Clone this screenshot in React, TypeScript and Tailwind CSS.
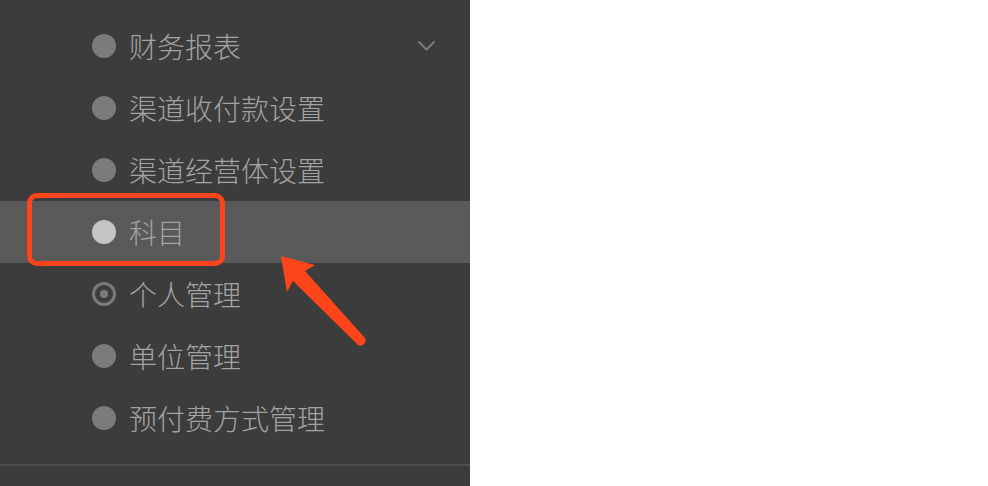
const items = [
  { label: "财务报表", kind: "dot", chevron: true },
  { label: "渠道收付款设置", kind: "dot" },
  { label: "渠道经营体设置", kind: "dot" },
  { label: "科目", kind: "active" },
  { label: "个人管理", kind: "ring" },
  { label: "单位管理", kind: "dot" },
  { label: "预付费方式管理", kind: "dot" },
];

const Marker = ({ kind }: { kind: string }) => {
  if (kind === "ring") {
    return (
      <span className="w-6 h-6 rounded-full border-[3px] border-[#7b7b7b] flex items-center justify-center">
        <span className="w-[8px] h-[8px] rounded-full bg-[#7b7b7b]" />
      </span>
    );
  }
  return (
    <span
      className={
        kind === "active"
          ? "w-6 h-6 rounded-full bg-[#c4c4c4]"
          : "w-6 h-6 rounded-full bg-[#7b7b7b]"
      }
    />
  );
};

export default function App() {
  return (
    <div className="relative w-[988px] h-[486px] bg-white overflow-hidden">
      <aside className="w-[470px] h-full bg-[#3c3c3c] flex flex-col">
        <ul className="pt-[15px]">
          {items.map((it) => (
            <li
              key={it.label}
              className={
                "relative h-[62px] flex items-center pl-[92px] pr-[34px] " +
                (it.kind === "active" ? "bg-[#595959]" : "")
              }
            >
              <Marker kind={it.kind} />
              <span
                className="ml-[13px] text-[28px] leading-none text-[#a3a3a3] font-light -mt-[1px]"
                style={{ fontFamily: '"Noto Sans CJK SC", "Noto Sans", sans-serif' }}
              >
                {it.label}
              </span>
              {it.chevron && (
                <svg
                  className="ml-auto"
                  width="19"
                  height="12"
                  viewBox="0 0 19 12"
                  fill="none"
                  stroke="#7a7a7a"
                  strokeWidth="2.2"
                >
                  <path d="M1.5 1.5 L9.5 9.5 L17.5 1.5" />
                </svg>
              )}
            </li>
          ))}
        </ul>
        <div className="mt-[15px] h-[2px] bg-[#4f4f4f]" />
      </aside>

      {/* annotation box */}
      <div className="absolute left-[27px] top-[193px] w-[198px] h-[73px] rounded-[10px] border-[5px] border-[#fe4519]" />

      {/* annotation arrow */}
      <svg className="absolute left-0 top-0" width="988" height="486" viewBox="0 0 988 486">
        <path
          d="M281 256 L315 265 L305 271 L365 338 Q367 342 363 345 Q359 347 357 344 L293 281 L287 292 Z"
          fill="#fe4519"
        />
      </svg>
    </div>
  );
}
